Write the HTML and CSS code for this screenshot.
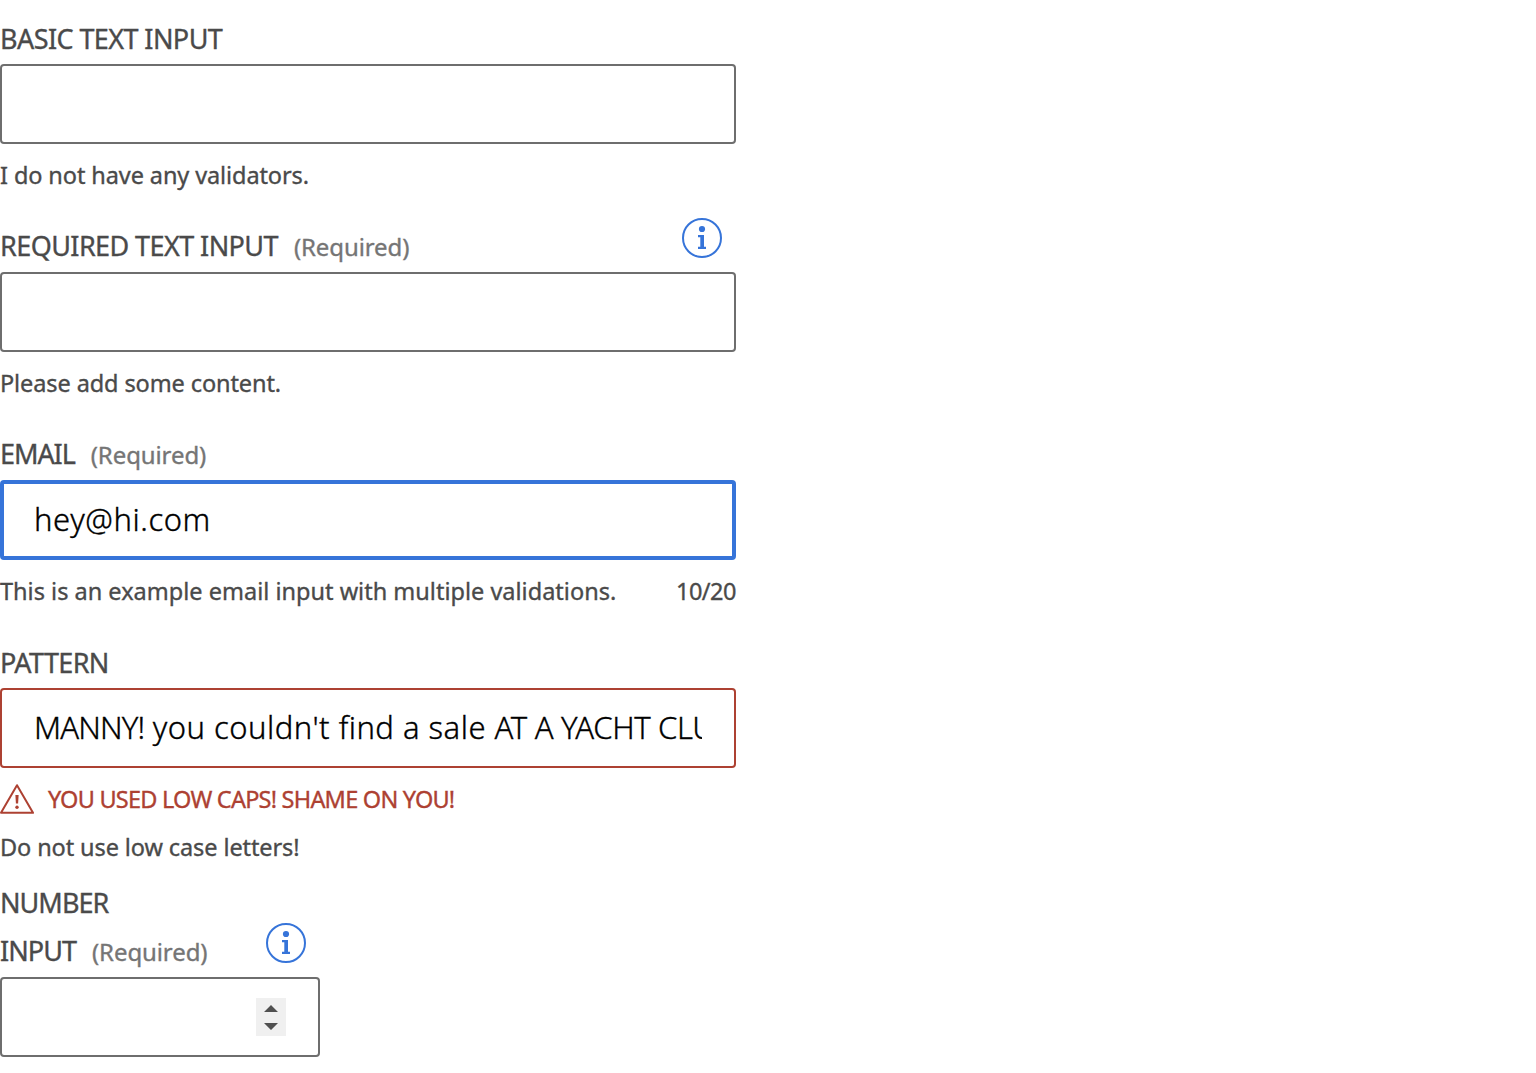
FILE: index.html
```html
<!DOCTYPE html>
<html lang="en">
<head>
<meta charset="utf-8">
<title>Text inputs</title>
<link rel="stylesheet" href="styles.css">
</head>
<body>
<svg width="0" height="0" class="defs" aria-hidden="true">
  <symbol id="info" viewBox="0 0 40 40">
    <circle cx="20" cy="20" r="19" fill="none" stroke="currentColor" stroke-width="2"/>
    <circle cx="20" cy="11" r="3.1" fill="currentColor"/>
    <path d="M16 17h6v11.8h2V31h-8v-2.2h2.3v-9.6H16z" fill="currentColor"/>
  </symbol>
</svg>
<form class="form">
  <section class="field">
    <div class="label"><span class="name basic">BASIC TEXT INPUT</span></div>
    <div class="box"></div>
    <div class="help"><span class="help-validators">I do not have any validators.</span></div>
  </section>

  <section class="field">
    <div class="label raised"><span class="name basic">REQUIRED TEXT INPUT</span><span class="required">(Required)</span><svg class="info"><use href="#info"/></svg></div>
    <div class="box"></div>
    <div class="help"><span>Please add some content.</span></div>
  </section>

  <section class="field">
    <div class="label raised"><span class="name email">EMAIL</span><span class="required">(Required)</span></div>
    <div class="box focused"><span class="value lower">hey@hi.com</span></div>
    <div class="help"><span class="help-email">This is an example email input with multiple validations.</span><span class="count">10/20</span></div>
  </section>

  <section class="field pattern-field">
    <div class="label"><span class="name pattern">PATTERN</span></div>
    <div class="box invalid"><span class="value"><span class="upper">MANNY!</span><span class="middle"> you couldn't find a sale </span><span class="club">AT A YACHT CLU</span></span></div>
    <div class="error">
      <svg class="warn" viewBox="0 0 34 30"><path d="M17 1.2 33 28.8H1z" fill="none" stroke="currentColor" stroke-width="2" stroke-linejoin="round"/><path d="M15.4 11h3.2l-.5 8.4h-2.2z" fill="currentColor"/><circle cx="17" cy="23.3" r="1.7" fill="currentColor"/></svg>
      <span>YOU USED LOW CAPS! SHAME ON YOU!</span>
    </div>
    <div class="help tight"><span class="help-case">Do not use low case letters!</span></div>
  </section>

  <section class="field number-field">
    <div class="label"><span class="name number-name">NUMBER</span></div>
    <div class="label last"><span class="name number-name">INPUT</span><span class="required">(Required)</span><svg class="info"><use href="#info"/></svg></div>
    <div class="box number">
      <svg class="spinner" viewBox="0 0 30 38"><path d="M0 0h30v38H0z" fill="#f0f0f0"/><path d="M8 14l7-7 7 7zM8 25l7 7 7-7z" fill="#505050"/></svg>
    </div>
  </section>
</form>
</body>
</html>
```
FILE: styles.css
```css
* { box-sizing: border-box; }

body {
  margin: 0;
  background: #fff;
  color: #4a4a4a;
  font-family: "Noto Sans", "Open Sans", sans-serif;
  -webkit-text-stroke: 0.35px currentColor;
  overflow: hidden;
}

.defs { display: block; }

.form {
  display: flex;
  flex-direction: column;
  gap: 16px;
  width: 736px;
  padding-top: 16px;
}

.label {
  display: flex;
  align-items: baseline;
  height: 48px;
  font-size: 27px;
  line-height: 45px;
  white-space: nowrap;
}

.raised { height: 49px; margin-top: -1px; }
.last { height: 49px; }

.basic { letter-spacing: -0.58px; }
.email { letter-spacing: -1.06px; }
.pattern { letter-spacing: -0.65px; }
.number-name { letter-spacing: -0.95px; }

.required {
  margin-left: 16px;
  color: #757575;
  font-size: 24px;
  letter-spacing: -0.1px;
}

.info {
  align-self: flex-start;
  width: 40px;
  height: 40px;
  margin: -5px 14px 0 auto;
  color: #3674d9;
}

.box {
  display: flex;
  align-items: center;
  height: 80px;
  padding: 0 32px 3px;
  border: 2px solid #6e6e6e;
  border-radius: 4px;
}

.focused {
  padding: 0 30px 3px;
  border: 4px solid #3674d9;
}

.invalid { border-color: #ad4132; }

.value {
  flex: 1;
  overflow: hidden;
  color: #000;
  font-size: 31px;
  font-weight: 300;
  white-space: pre;
}

.lower { letter-spacing: 0.58px; }
.upper { letter-spacing: -0.85px; }
.middle { letter-spacing: 0.48px; }
.club { letter-spacing: -0.35px; }

.help {
  display: flex;
  justify-content: space-between;
  height: 64px;
  padding-top: 8px;
  font-size: 23.5px;
  line-height: 46px;
  letter-spacing: -0.1px;
  white-space: nowrap;
}

.help .help-email { letter-spacing: 0.01px; }
.help-validators { letter-spacing: -0.1px; }
.help-case { letter-spacing: -0.1px; }
.count { letter-spacing: -0.5px; }

.error {
  display: flex;
  align-items: center;
  gap: 14px;
  height: 48px;
  margin-top: 8px;
  color: #ad4132;
  font-size: 23.5px;
  line-height: 46px;
  letter-spacing: -0.77px;
  white-space: nowrap;
}

.error span { margin-top: -2px; }

.warn {
  width: 34px;
  height: 30px;
  margin-top: -2px;
}

.tight { height: 48px; padding-top: 0; }

.number-field {
  width: 320px;
  margin-top: -8px;
}

.number { justify-content: flex-end; padding-bottom: 0; }

.spinner { width: 30px; height: 38px; }
```
